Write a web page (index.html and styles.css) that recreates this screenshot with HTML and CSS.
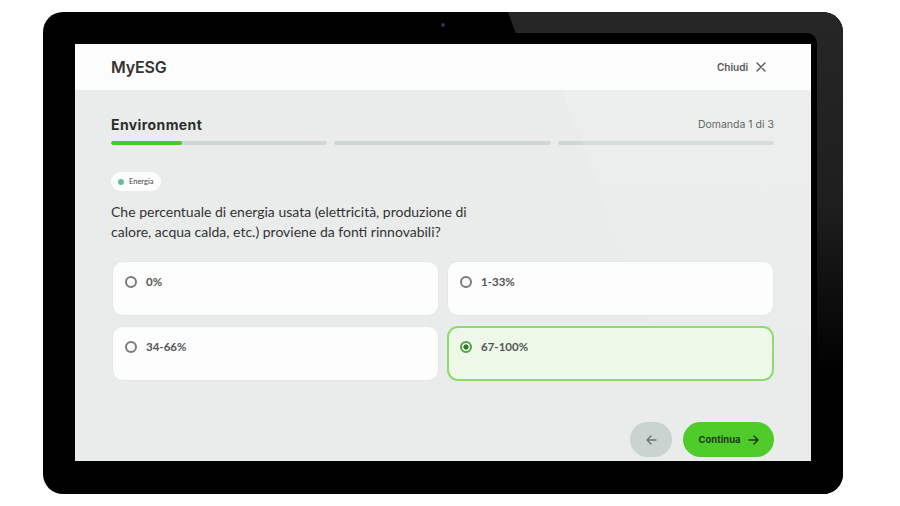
FILE: index.html
```html
<!DOCTYPE html>
<html lang="it">
<head>
<meta charset="utf-8">
<title>MyESG</title>
<link rel="stylesheet" href="styles.css">
</head>
<body>
<div class="device">
  <div class="glare"></div>
  <span class="camera"></span>
  <div class="ring">
    <div class="screen">
      <header class="topbar">
        <span class="brand">MyESG</span>
        <span class="close">Chiudi
          <svg width="10" height="10" viewBox="0 0 10 10"><path d="M1 1L9 9M9 1L1 9" stroke="#333" stroke-width="1.3" stroke-linecap="round"/></svg>
        </span>
      </header>
      <main class="content">
        <div class="head-row">
          <h1 class="section">Environment</h1>
          <span class="counter">Domanda 1 di 3</span>
        </div>
        <div class="progress">
          <div class="seg"><div class="fill" style="width:33%"></div></div>
          <div class="seg"></div>
          <div class="seg"></div>
        </div>
        <span class="chip"><span class="dot"></span>Energia</span>
        <p class="question">Che percentuale di energia usata (elettricità, produzione di<br>calore, acqua calda, etc.) proviene da fonti rinnovabili?</p>
        <div class="options">
          <label class="opt"><span class="radio"></span>0%</label>
          <label class="opt"><span class="radio"></span>1-33%</label>
          <label class="opt"><span class="radio"></span>34-66%</label>
          <label class="opt selected"><span class="radio on"></span>67-100%</label>
        </div>
        <div class="actions">
          <button class="back">
            <svg width="11" height="10" viewBox="0 0 11 10"><path d="M10 5H1.5M5 1L1 5l4 4" fill="none" stroke="#6f7573" stroke-width="1.3" stroke-linecap="round" stroke-linejoin="round"/></svg>
          </button>
          <button class="next">Continua
            <svg width="11" height="10" viewBox="0 0 11 10"><path d="M1 5h8.5M6 1l4 4-4 4" fill="none" stroke="#1f3a16" stroke-width="1.4" stroke-linecap="round" stroke-linejoin="round"/></svg>
          </button>
        </div>
      </main>
      <div class="screen-glare"></div>
    </div>
  </div>
</div>
</body>
</html>
```
FILE: styles.css
```css
* { box-sizing: border-box; }
html, body { margin: 0; padding: 0; background: #ffffff; }
body { width: 900px; height: 506px; overflow: hidden; }

.device {
  position: relative;
  margin: 12px 0 0 43px;
  width: 800px;
  height: 482px;
  background: #000;
  border-radius: 20px;
  padding: 21px 26px 27px 21px;
  overflow: hidden;
}
.glare {
  position: absolute;
  inset: 0;
  background: linear-gradient(180deg, #262626 0%, #1e1e1e 40%, #000 75%);
  clip-path: polygon(465px 0, 800px 0, 800px 482px, 640px 482px);
}
.camera {
  position: absolute;
  left: 398px;
  top: 11px;
  width: 4px;
  height: 4px;
  border-radius: 50%;
  background: #2d3550;
}
.ring {
  position: relative;
  background: #000;
  border-radius: 10px;
  padding: 11px 6px 6px 11px;
  height: 100%;
}
.screen {
  position: relative;
  width: 736px;
  height: 417px;
  background: #e9eceb;
  overflow: hidden;
  display: flex;
  flex-direction: column;
}
.screen-glare {
  position: absolute;
  inset: 0;
  background: linear-gradient(180deg, rgba(255,255,255,0.18) 0%, rgba(255,255,255,0.06) 50%, rgba(255,255,255,0) 85%);
  clip-path: polygon(470px 0, 736px 0, 736px 417px, 625px 417px);
  pointer-events: none;
}

.topbar {
  height: 46px;
  flex: none;
  background: #fcfcfc;
  display: flex;
  align-items: center;
  justify-content: space-between;
  padding: 0 45px 0 36px;
}
.brand {
  font-family: Inter, "Noto Sans", sans-serif;
  font-weight: 600;
  font-size: 16px;
  color: #333;
  letter-spacing: -0.2px;
}
.close {
  display: flex;
  align-items: center;
  gap: 8px;
  font-family: Inter, "Noto Sans", sans-serif;
  font-weight: 600;
  font-size: 10px;
  color: #333;
}

.content {
  flex: 1;
  padding: 24px 37px 0 36px;
  display: flex;
  flex-direction: column;
  align-items: flex-start;
}
.head-row {
  width: 100%;
  height: 20px;
  display: flex;
  align-items: center;
  justify-content: space-between;
}
.section {
  margin: 0;
  font-family: Inter, "Noto Sans", sans-serif;
  font-weight: 700;
  font-size: 14px;
  letter-spacing: 0.4px;
  color: #2c2c2c;
}
.counter {
  font-family: Inter, "Noto Sans", sans-serif;
  font-size: 10.5px;
  color: #4d4d4d;
}
.progress {
  width: 100%;
  margin-top: 7px;
  display: grid;
  grid-template-columns: repeat(3, 1fr);
  gap: 7px;
}
.seg {
  height: 4px;
  border-radius: 2px;
  background: #cfd7d5;
  overflow: hidden;
}
.fill {
  height: 100%;
  background: #4cc62c;
  border-radius: 2px;
}
.chip {
  margin-top: 27px;
  height: 19px;
  padding: 0 8px 0 7px;
  border-radius: 10px;
  background: #fdfdfd;
  display: inline-flex;
  align-items: center;
  gap: 5px;
  font-family: Lato, sans-serif;
  font-size: 7.5px;
  color: #444;
}
.dot {
  width: 6px;
  height: 6px;
  border-radius: 50%;
  background: #5fc58f;
}
.question {
  margin: 11px 0 0;
  font-family: Lato, sans-serif;
  font-size: 14px;
  line-height: 20px;
  color: #333;
}
.options {
  width: 100%;
  margin-top: 19px;
  display: grid;
  grid-template-columns: 1fr 1fr;
  column-gap: 8px;
  row-gap: 10px;
  padding-left: 1px;
}
.opt {
  height: 55px;
  background: #fdfdfd;
  border: 1px solid #e3e7e6;
  border-radius: 11px;
  padding: 13px 12px 0;
  display: flex;
  align-items: flex-start;
  gap: 9px;
  font-family: Lato, sans-serif;
  font-weight: 700;
  font-size: 11.5px;
  line-height: 14px;
  color: #555;
}
.opt.selected {
  background: #eef8e9;
  border: 2px solid #8bdb6e;
  padding: 12px 11px 0;
}
.radio {
  width: 12px;
  height: 12px;
  flex: none;
  border-radius: 50%;
  border: 2px solid #767d7b;
  margin-top: 1px;
}
.radio.on {
  border-color: #5a9c4b;
  background: radial-gradient(circle, #2f7e26 0 2.3px, transparent 2.9px);
}
.actions {
  width: 100%;
  margin-top: 41px;
  display: flex;
  justify-content: flex-end;
  gap: 11px;
}
.actions button {
  height: 35px;
  border: none;
  border-radius: 18px;
  display: flex;
  align-items: center;
  justify-content: center;
  cursor: pointer;
}
.back {
  width: 42px;
  background: #c9d3d0;
}
.next {
  width: 91px;
  background: #4fcb2a;
  gap: 7px;
  font-family: Inter, "Noto Sans", sans-serif;
  font-weight: 700;
  font-size: 9.5px;
  color: #1f3a16;
}
```
